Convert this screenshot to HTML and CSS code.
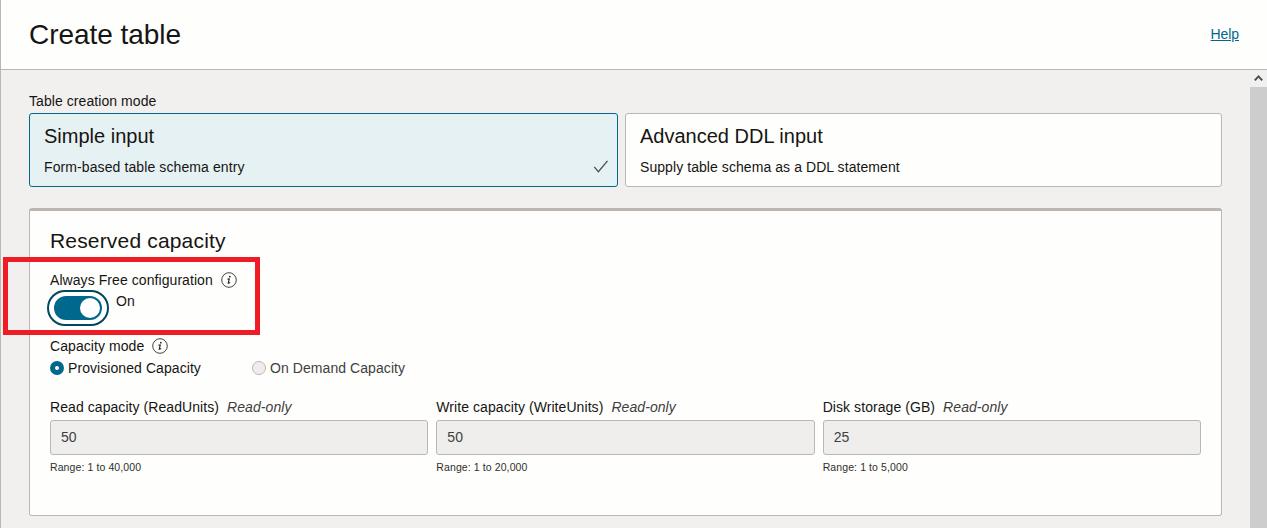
FILE: index.html
```html
<!DOCTYPE html>
<html lang="en">
<head>
<meta charset="utf-8">
<title>Create table</title>
<link rel="stylesheet" href="styles.css">
</head>
<body>
<div class="drawer">
  <header class="header">
    <h1 class="title">Create table</h1>
    <a class="help" href="#">Help</a>
  </header>
  <div class="body">
    <main class="content">
      <div class="label">Table creation mode</div>
      <div class="modes">
        <div class="mode mode-selected">
          <h2 class="mode-title">Simple input</h2>
          <div class="mode-row">
            <span class="mode-text">Form-based table schema entry</span>
            <svg class="check" width="16" height="14" viewBox="0 0 16 14"><path d="M1.2 6.9 5.4 11.7 14.5 0.9" fill="none" stroke="#4a4f50" stroke-width="1.3"/></svg>
          </div>
        </div>
        <div class="mode">
          <h2 class="mode-title">Advanced DDL input</h2>
          <div class="mode-row"><span>Supply table schema as a DDL statement</span></div>
        </div>
      </div>
      <section class="panel">
        <h2 class="panel-title">Reserved capacity</h2>
        <div class="label-row">
          <span>Always Free configuration</span>
          <svg class="info" width="16" height="16" viewBox="0 0 16 16"><circle cx="8" cy="8" r="7.3" fill="none" stroke="#444" stroke-width="1"/><circle cx="8.8" cy="4.7" r=".85" fill="#222"/><path d="M6.5 7.1H8.3L7.2 11.2Q7.9 11.5 9.1 10.3" fill="none" stroke="#222" stroke-width="1.1"/></svg>
        </div>
        <div class="switch-row">
          <div class="switch"><div class="track"><div class="thumb"></div></div></div>
          <span class="switch-state">On</span>
        </div>
        <div class="label-row">
          <span>Capacity mode</span>
          <svg class="info" width="16" height="16" viewBox="0 0 16 16"><circle cx="8" cy="8" r="7.3" fill="none" stroke="#444" stroke-width="1"/><circle cx="8.8" cy="4.7" r=".85" fill="#222"/><path d="M6.5 7.1H8.3L7.2 11.2Q7.9 11.5 9.1 10.3" fill="none" stroke="#222" stroke-width="1.1"/></svg>
        </div>
        <div class="radios">
          <div class="radio"><i class="dot dot-on"></i><span>Provisioned Capacity</span></div>
          <div class="radio radio-off"><i class="dot"></i><span>On Demand Capacity</span></div>
        </div>
        <div class="fields">
          <div class="field">
            <div class="field-label">Read capacity (ReadUnits)<em class="readonly">Read-only</em></div>
            <div class="input">50</div>
            <div class="hint">Range: 1 to 40,000</div>
          </div>
          <div class="field">
            <div class="field-label">Write capacity (WriteUnits)<em class="readonly">Read-only</em></div>
            <div class="input">50</div>
            <div class="hint">Range: 1 to 20,000</div>
          </div>
          <div class="field">
            <div class="field-label">Disk storage (GB)<em class="readonly">Read-only</em></div>
            <div class="input">25</div>
            <div class="hint">Range: 1 to 5,000</div>
          </div>
        </div>
      </section>
    </main>
    <div class="scrollbar">
      <div class="scroll-up"><svg width="17" height="17" viewBox="0 0 17 17"><path d="M4.8 10.4 8.5 6.4 12.2 10.4" fill="none" stroke="#505050" stroke-width="2"/></svg></div>
      <div class="scroll-thumb"></div>
    </div>
  </div>
  <div class="highlight"></div>
</div>
</body>
</html>
```

FILE: styles.css
```css
* { box-sizing: border-box; }
body { margin: 0; overflow: hidden; font: 14px/20px "Liberation Sans", Arial, sans-serif; letter-spacing: 0.07px; color: #161513; }
h1, h2 { margin: 0; font-weight: 400; letter-spacing: 0; }
svg { display: block; flex: none; }
.drawer { position: relative; height: 528px; display: flex; flex-direction: column; border-left: 1px solid #bcb6b1; background: #f2f0ef; }
.header { flex: none; height: 70px; display: flex; align-items: center; justify-content: space-between; padding: 0 28px; background: #fefefc; border-bottom: 1px solid #bcb6b1; }
.title { font-size: 28px; line-height: 32px; letter-spacing: -0.05px; }
.help { margin-bottom: 2px; letter-spacing: -0.1px; color: #00688c; text-decoration: underline; }
.body { flex: 1; min-height: 0; display: flex; }
.content { flex: 1; padding: 21px 28px 0; }
.label { height: 22px; line-height: 20px; }
.modes { display: grid; grid-template-columns: 589px 597px; gap: 7px; }
.mode { height: 74px; padding: 10px 8px 0 14px; border: 1px solid #bcb6b1; border-radius: 3px; background: #fefefc; }
.mode-selected { border-color: #00688c; background: #e6f1f4; }
.mode-title { font-size: 20px; line-height: 24px; margin-bottom: 9px; }
.mode-row { display: flex; justify-content: space-between; align-items: center; }
.mode-text { letter-spacing: 0.1px; }
.panel { height: 308px; margin-top: 21px; padding: 18px 20px 0; border: 1px solid #bcb6b1; border-top-width: 3px; border-radius: 3px; background: #fefefc; }
.panel-title { font-size: 21px; line-height: 24px; margin-bottom: 17px; letter-spacing: 0.17px; }
.label-row { display: flex; align-items: center; gap: 8px; height: 20px; }
.switch-row { display: flex; gap: 7px; height: 46px; margin-left: -3px; }
.switch { width: 62px; height: 36px; padding: 4px 5px; border: 2px solid #00485f; border-radius: 18px; background: #fff; }
.switch-state { padding-top: 1px; }
.track { display: flex; justify-content: flex-end; width: 48px; height: 24px; padding: 2px; border-radius: 12px; background: #00688c; }
.thumb { width: 20px; height: 20px; border-radius: 50%; background: #fff; }
.radios { display: flex; height: 39px; padding-top: 2px; }
.radio { display: flex; align-items: center; gap: 4px; width: 202px; height: 20px; }
.radio-off { color: #403f3d; }
.dot { width: 14px; height: 14px; border: 1px solid #bcb6b1; border-radius: 50%; background: #efedec; }
.dot-on { border: 5px solid #00688c; background: #fff; }
.fields { display: grid; grid-template-columns: repeat(3, 1fr); gap: 8px; padding-top: 2px; }
.field-label { height: 23px; }
.readonly { margin-left: 8px; color: #403f3d; }
.input { height: 35px; padding: 0 10px; line-height: 33px; border: 1px solid #bcb6b1; border-radius: 3px; background: #efeeed; color: #403f3d; }
.hint { margin-top: 4px; font-size: 10.5px; line-height: 16px; letter-spacing: 0.1px; color: #302f2d; }
.scrollbar { flex: none; width: 17px; display: flex; flex-direction: column; background: #f0f0f0; }
.scroll-up { height: 17px; }
.scroll-thumb { flex: 1; background: #cdcdcd; }
.highlight { position: absolute; left: 2px; top: 257px; width: 257px; height: 78px; border: 5px solid #ee1c25; }
```
